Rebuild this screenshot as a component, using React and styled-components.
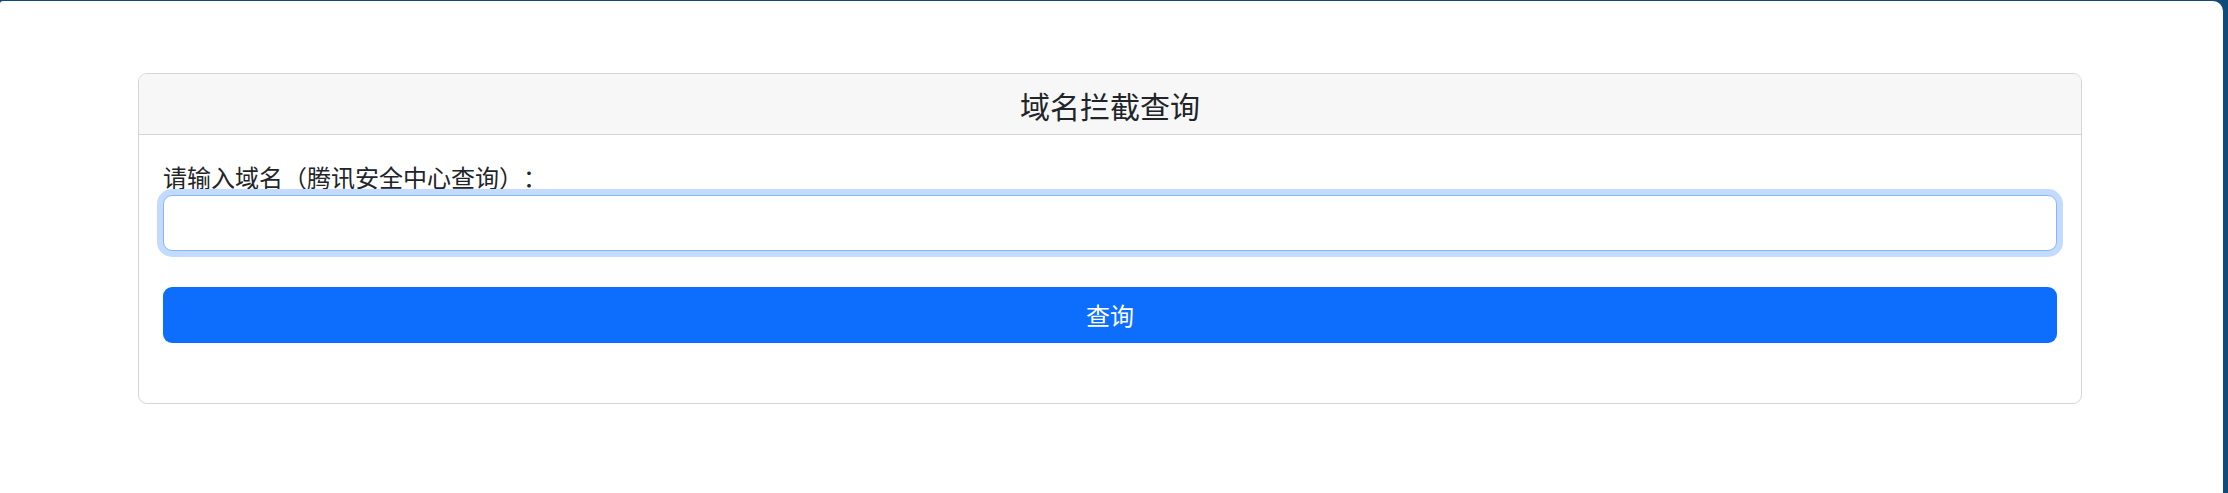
import React from 'react';
import styled, { createGlobalStyle } from 'styled-components';

const GlobalStyle = createGlobalStyle`
  html, body {
    margin: 0;
    padding: 0;
    height: 100%;
    background: #0d4b7b;
  }
  #root {
    height: 100%;
  }
  * {
    box-sizing: border-box;
  }
`;

const Frame = styled.div`
  margin: 1px 5px 0 0;
  height: calc(100% - 1px);
  background: #fff;
  border-radius: 3px 10px 0 0;
  padding: 72px 141px 0 138px;
  font-family: "Noto Sans CJK SC", "Noto Sans", sans-serif;
  color: #212529;
  text-spacing-trim: space-all;
`;

const Card = styled.div`
  border: 1px solid #d5d5d5;
  border-radius: 9px;
  background: #fff;
  overflow: hidden;
`;

const CardHeader = styled.div`
  height: 61px;
  display: flex;
  align-items: center;
  justify-content: center;
  background: #f7f7f7;
  border-bottom: 1px solid #d5d5d5;
`;

const Title = styled.h5`
  margin: 0;
  font-size: 30px;
  font-weight: 400;
  line-height: 1;
  padding-top: 1px;
`;

const CardBody = styled.form`
  padding: 24px 24px 60px 24px;
  display: flex;
  flex-direction: column;
`;

const Label = styled.label`
  font-size: 24px;
  line-height: 36px;
`;

const Input = styled.input`
  display: block;
  width: 100%;
  height: 56px;
  padding: 9px 18px;
  font-size: 24px;
  font-family: inherit;
  color: #212529;
  background: #fff;
  border: 1px solid #86b7fe;
  border-radius: 9px;
  outline: none;
  box-shadow: 0 0 0 6px #c2dbfe;
`;

const SubmitButton = styled.button`
  margin-top: 36px;
  height: 56px;
  width: 100%;
  border: none;
  border-radius: 9px;
  background: #0d6efd;
  color: #fff;
  font-family: inherit;
  font-size: 24px;
  line-height: 1;
  cursor: pointer;
`;

export default function App() {
  return (
    <>
      <GlobalStyle />
      <Frame lang="zh-CN">
        <Card>
          <CardHeader>
            <Title>域名拦截查询</Title>
          </CardHeader>
          <CardBody onSubmit={e => e.preventDefault()}>
            <Label htmlFor="domain">请输入域名（腾讯安全中心查询）：</Label>
            <Input id="domain" type="text" />
            <SubmitButton type="submit">查询</SubmitButton>
          </CardBody>
        </Card>
      </Frame>
    </>
  );
}
